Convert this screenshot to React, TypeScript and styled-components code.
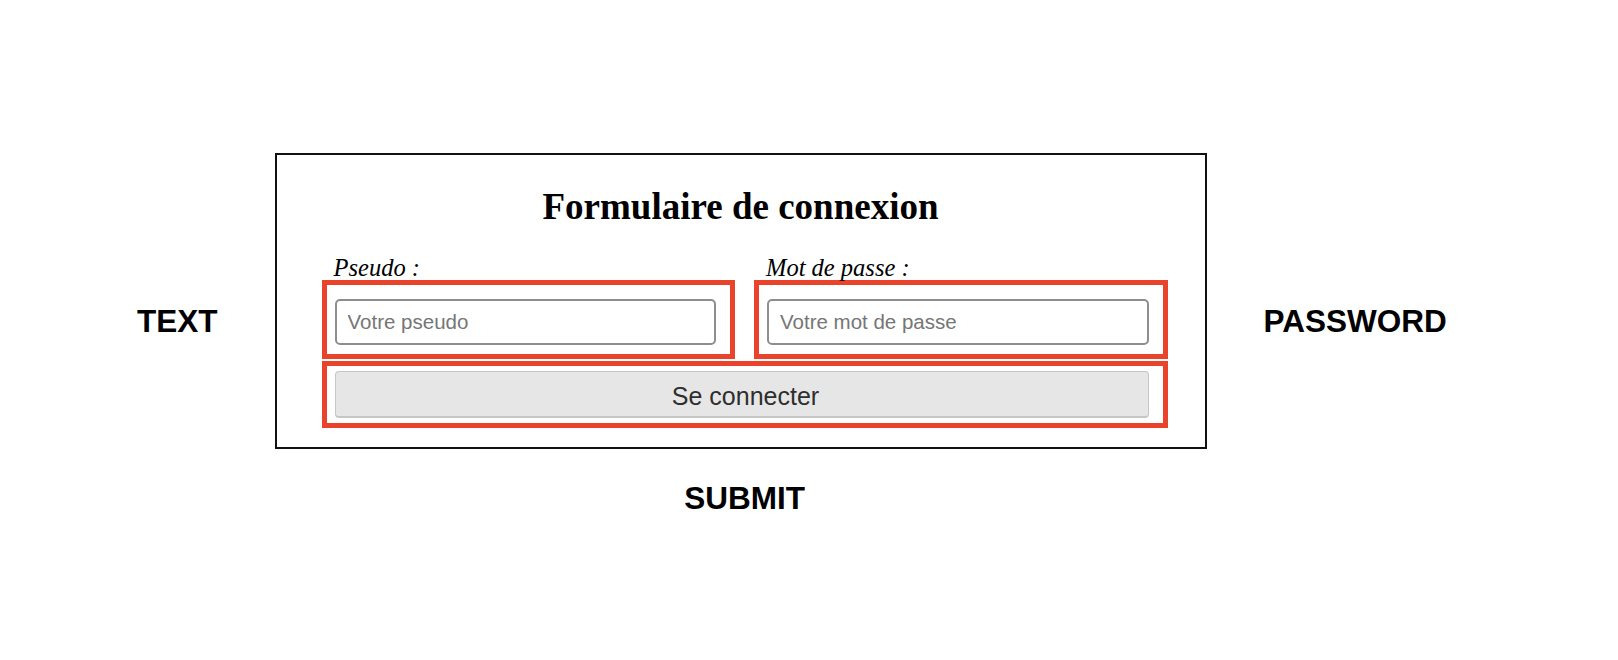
import React from 'react'
import styled, { createGlobalStyle } from 'styled-components'

const GlobalStyle = createGlobalStyle`
  html, body {
    margin: 0;
    background: #fff;
  }
`

const Page = styled.main`
  display: grid;
  grid-template-columns: max-content 932px max-content;
  justify-content: start;
  column-gap: 57px;
  align-items: start;
  padding: 153px 0 0 137px;
`

const SideTag = styled.span`
  margin-top: 150px;
  font: 700 31.5px/36px 'Liberation Sans', Arial, sans-serif;
  color: #000;
  white-space: nowrap;
`

const BottomTag = styled(SideTag)`
  grid-column: 2;
  margin-top: 31px;
  padding-left: 8px;
  text-align: center;
`

const Box = styled.form`
  box-sizing: border-box;
  border: 2px solid #111;
  padding: 31px 37px 19px 45px;
`

const Title = styled.h1`
  margin: 0 -37px 0 -45px;
  font: 700 37px/42px 'Liberation Serif', 'Times New Roman', serif;
  color: #000;
  text-align: center;
`

const Fields = styled.div`
  display: grid;
  grid-template-columns: 1fr 1fr;
  column-gap: 19px;
  margin-top: 27px;
`

const Label = styled.label`
  display: block;
  padding-left: 12px;
  font: italic 24.5px/25px 'Liberation Serif', 'Times New Roman', serif;
  color: #000;
`

const Frame = styled.div<{ $submit?: boolean }>`
  border: 5px solid #e9432b;
  padding: ${p => (p.$submit ? '5px 14px 5px 8px' : '14px 14px 9px 8px')};
  margin-top: ${p => (p.$submit ? '2px' : '0')};
`

const Input = styled.input`
  display: block;
  box-sizing: border-box;
  width: 100%;
  height: 46px;
  margin: 0;
  padding: 0 11px;
  border: 2px solid #8e8e8e;
  border-radius: 5px;
  font: 20.5px 'Liberation Sans', Arial, sans-serif;
  color: #222;
  background: #fff;

  &::placeholder {
    color: #767676;
  }
`

const Button = styled.button`
  display: block;
  box-sizing: border-box;
  width: 100%;
  height: 47px;
  margin: 0;
  padding: 5px 0 0 8px;
  border: 1px solid #c6c6c6;
  border-bottom-width: 2px;
  border-radius: 4px;
  background: #e6e6e6;
  font: 25px 'Liberation Sans', Arial, sans-serif;
  color: #2e2e2e;
`

const App: React.FC = () => (
  <>
    <GlobalStyle />
    <Page>
      <SideTag>TEXT</SideTag>
      <Box onSubmit={e => e.preventDefault()}>
        <Title>Formulaire de connexion</Title>
        <Fields>
          <div>
            <Label htmlFor="pseudo">Pseudo :</Label>
            <Frame>
              <Input id="pseudo" type="text" placeholder="Votre pseudo" />
            </Frame>
          </div>
          <div>
            <Label htmlFor="password">Mot de passe :</Label>
            <Frame>
              <Input id="password" type="password" placeholder="Votre mot de passe" />
            </Frame>
          </div>
        </Fields>
        <Frame $submit>
          <Button type="submit">Se connecter</Button>
        </Frame>
      </Box>
      <SideTag>PASSWORD</SideTag>
      <BottomTag>SUBMIT</BottomTag>
    </Page>
  </>
)

export default App
